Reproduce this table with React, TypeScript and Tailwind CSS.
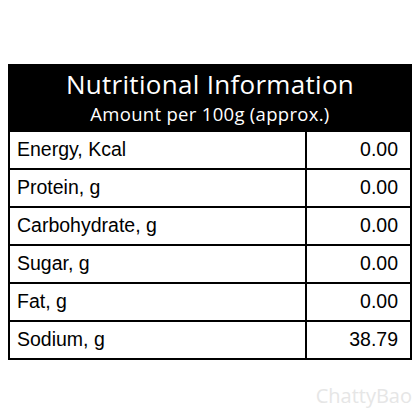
const ROWS = [
  { label: "Energy, Kcal", value: "0.00" },
  { label: "Protein, g", value: "0.00" },
  { label: "Carbohydrate, g", value: "0.00" },
  { label: "Sugar, g", value: "0.00" },
  { label: "Fat, g", value: "0.00" },
  { label: "Sodium, g", value: "38.79" },
];

export default function App() {
  return (
    <div className="w-[420px] h-[420px] bg-white pt-[64px] px-[8px] flex flex-col">
      <div className="w-[404px] border-2 border-black">
        {/* Header */}
        <div className="bg-black h-[64px] flex flex-col items-center text-white font-['Open_Sans',sans-serif]">
          <div className="text-[26px] leading-[26px] mt-[5px] tracking-[0.3px]">Nutritional Information</div>
          <div className="text-[18.5px] leading-[19px] mt-[7px] tracking-[0.3px]">Amount per 100g (approx.)</div>
        </div>

        {/* Rows */}
        {ROWS.map((row) => (
          <div
            key={row.label}
            className="flex h-[38px] border-t-2 border-black font-['Liberation_Sans',Arial,sans-serif] text-[19.5px] text-black"
          >
            <div className="w-[297px] border-r-2 border-black flex items-center pl-[7px]">{row.label}</div>
            <div className="flex-1 flex items-center justify-end pr-[12px]">{row.value}</div>
          </div>
        ))}
      </div>

      {/* Watermark */}
      <div className="flex justify-end mt-[26px] font-['Open_Sans',sans-serif] text-[20px] leading-none text-[#e6e6e6]">
        ChattyBao
      </div>
    </div>
  );
}
